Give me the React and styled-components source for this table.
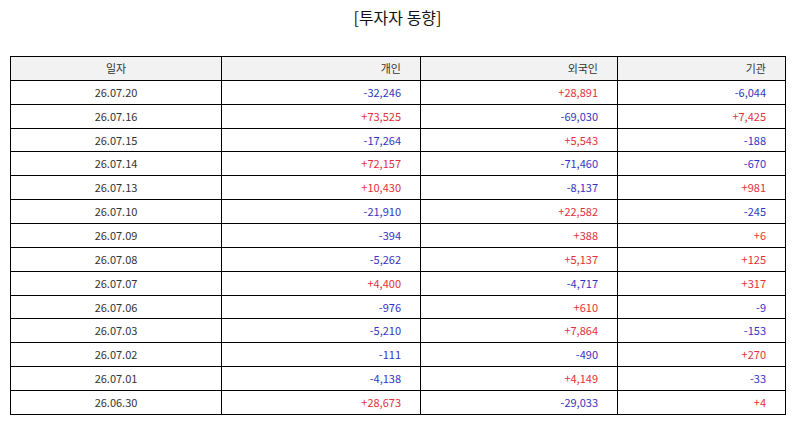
import React from "react";
import styled, { createGlobalStyle } from "styled-components";

const GlobalStyle = createGlobalStyle`
  body {
    margin: 0;
    background: #fff;
    font-family: "Noto Sans CJK KR", "Noto Sans", sans-serif;
    color: #333;
  }
`;

const Page = styled.div`
  padding: 0 9px 0 10px;
`;

const Title = styled.h2`
  margin: 0;
  height: 56px;
  padding-top: 5px;
  box-sizing: border-box;
  text-align: center;
  font-size: 16px;
  font-weight: 400;
  color: #111;
`;

const Table = styled.table`
  width: 775px;
  border-collapse: collapse;
  table-layout: fixed;
  font-size: 11px;

  tr {
    height: 23.87px;
  }

  th,
  td {
    padding: 0 19px;
    border: 1px solid #000;
    line-height: 1;
  }

  th {
    background: #f2f2f2;
    font-weight: 400;
    color: #333;
  }
`;

const Cell = styled.td`
  text-align: ${(p) => (p.$date ? "center" : "right")};
  color: ${(p) => (p.$value == null ? "#333" : p.$value < 0 ? "#3434c4" : "#e2303a")};
`;

const Head = styled.th`
  text-align: ${(p) => (p.$center ? "center" : "right")};
`;

const rows = [
  ["26.07.20", -32246, 28891, -6044],
  ["26.07.16", 73525, -69030, 7425],
  ["26.07.15", -17264, 5543, -188],
  ["26.07.14", 72157, -71460, -670],
  ["26.07.13", 10430, -8137, 981],
  ["26.07.10", -21910, 22582, -245],
  ["26.07.09", -394, 388, 6],
  ["26.07.08", -5262, 5137, 125],
  ["26.07.07", 4400, -4717, 317],
  ["26.07.06", -976, 610, -9],
  ["26.07.03", -5210, 7864, -153],
  ["26.07.02", -111, -490, 270],
  ["26.07.01", -4138, 4149, -33],
  ["26.06.30", 28673, -29033, 4],
];

const fmt = (n) => (n > 0 ? "+" : "-") + Math.abs(n).toLocaleString("en-US");

export default function App() {
  return (
    <Page>
      <GlobalStyle />
      <Title>[투자자 동향]</Title>
      <Table>
        <colgroup>
          <col style={{ width: 211 }} />
          <col style={{ width: 199 }} />
          <col style={{ width: 197 }} />
          <col style={{ width: 168 }} />
        </colgroup>
        <thead>
          <tr>
            <Head $center>일자</Head>
            <Head>개인</Head>
            <Head>외국인</Head>
            <Head>기관</Head>
          </tr>
        </thead>
        <tbody>
          {rows.map(([date, a, b, c]) => (
            <tr key={date}>
              <Cell $date>{date}</Cell>
              <Cell $value={a}>{fmt(a)}</Cell>
              <Cell $value={b}>{fmt(b)}</Cell>
              <Cell $value={c}>{fmt(c)}</Cell>
            </tr>
          ))}
        </tbody>
      </Table>
    </Page>
  );
}
